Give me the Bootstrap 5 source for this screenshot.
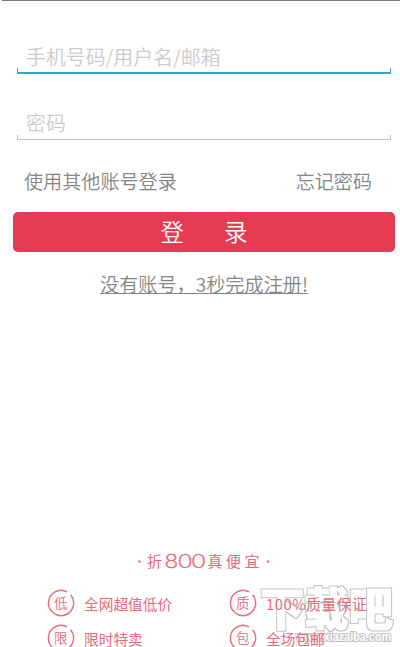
<!DOCTYPE html>
<html lang="zh-CN">
<head>
<meta charset="utf-8">
<meta name="viewport" content="width=device-width, initial-scale=1">
<title>登录</title>
<link href="https://cdn.jsdelivr.net/npm/bootstrap@5.3.0/dist/css/bootstrap.min.css" rel="stylesheet">
<style>
body{font-family:"Noto Sans CJK SC",sans-serif;font-weight:350;color:#858585;background:#fff}
.screen{width:400px;height:647px}
.topline{height:1px;margin-left:2px;background:#777}
.field{margin:0 9px 0 17px;height:34px;background:none}
.field input{height:34px;font-size:19.9px;line-height:34px;font-weight:350;color:#888;padding-left:9px}
.field input:focus{background:none;box-shadow:none}
.field input::placeholder{color:#cbcbcb;opacity:1}
.edge{left:0;right:0;bottom:0;height:5px;border:1px solid #c2c2c2;border-top:0}
.active-field .edge{border:2px solid #3ba3c4;border-left-width:1px;border-right-width:1px;border-top:0;height:6px}
.first{margin-top:39px}
.second{margin-top:32px}
.help{margin:26px 28px 0 24px;height:30px;font-size:19.1px;line-height:30px}
.help a{color:#858585}
.login-btn{margin:16px 5px 0 13px;height:40px;width:382px;border-radius:5px;background:#e53c54;color:#fff;font-size:23.5px;font-weight:350;gap:40px}
.login-btn:hover{background:#e53c54;color:#fff}
.register{margin:17px 0 0 100px;width:208px;height:30px;line-height:30px;font-size:19.15px}
.register a{color:#858585;text-decoration-thickness:1px;text-underline-offset:1px}
.slogan{margin-top:250px;height:24px}
.promises{margin:16px 0 0 47px;width:353px;row-gap:7px;z-index:1}
.promise{width:182px;height:28px;color:#e8697b;font-size:14.7px;line-height:28px;gap:9px}
.promise:nth-child(even){width:171px}
.promise span{font-weight:400;padding-top:1px}
.wide{letter-spacing:.56px}
.watermark{left:256px;top:580px}
</style>
<script src="https://cdn.jsdelivr.net/npm/bootstrap@5.3.0/dist/js/bootstrap.bundle.min.js"></script>
</head>
<body>
<main class="screen position-relative overflow-hidden d-flex flex-column">
  <div class="topline flex-shrink-0"></div>
  <div class="field first active-field position-relative flex-shrink-0">
    <input class="form-control border-0 bg-transparent py-0 pe-0" type="text" placeholder="手机号码/用户名/邮箱" aria-label="手机号码/用户名/邮箱">
    <div class="edge position-absolute"></div>
  </div>
  <div class="field second position-relative flex-shrink-0">
    <input class="form-control border-0 bg-transparent py-0 pe-0" type="password" placeholder="密码" aria-label="密码">
    <div class="edge position-absolute"></div>
  </div>
  <div class="help d-flex justify-content-between flex-shrink-0">
    <a class="text-decoration-none" href="#">使用其他账号登录</a>
    <a class="text-decoration-none" href="#">忘记密码</a>
  </div>
  <button type="button" class="login-btn btn border-0 p-0 d-flex justify-content-center align-items-center flex-shrink-0"><span>登</span><span>录</span></button>
  <div class="register text-nowrap flex-shrink-0"><a href="#">没有账号，3秒完成注册!</a></div>
  <div class="slogan flex-shrink-0">
    <svg class="d-block" width="400" height="24" fill="#e8697b" font-weight="400">
      <circle cx="139.500" cy="12.500" r="1.200"/>
      <text x="147" y="18" font-size="15">折</text>
      <text x="164.500" y="18.500" font-family="Lato" font-weight="300" font-size="19" stroke="#e8697b" stroke-width=".4" textLength="41" lengthAdjust="spacingAndGlyphs">800</text>
      <text x="207.500" y="18" font-size="15">真</text>
      <text x="226" y="18" font-size="15">便</text>
      <text x="244.500" y="18" font-size="15">宜</text>
      <circle cx="268" cy="12.500" r="1.200"/>
    </svg>
  </div>
  <div class="promises position-relative d-flex flex-wrap flex-shrink-0">
    <div class="promise d-flex align-items-center"><svg width="28" height="28" fill="none"><path d="M20 2.900A12.600 12.600 0 1 0 23.600 5.800" stroke="#e8697b" stroke-width="1.400"/><text x="7" y="19" font-size="13.500" fill="#e8697b">低</text></svg><span>全网超值低价</span></div>
    <div class="promise d-flex align-items-center"><svg width="28" height="28" fill="none"><path d="M20 2.900A12.600 12.600 0 1 0 23.600 5.800" stroke="#e8697b" stroke-width="1.400"/><text x="7" y="19" font-size="13.500" fill="#e8697b">质</text></svg><span class="wide">100%质量保证</span></div>
    <div class="promise d-flex align-items-center"><svg width="28" height="28" fill="none"><path d="M20 2.900A12.600 12.600 0 1 0 23.600 5.800" stroke="#e8697b" stroke-width="1.400"/><text x="7" y="19" font-size="13.500" fill="#e8697b">限</text></svg><span>限时特卖</span></div>
    <div class="promise d-flex align-items-center"><svg width="28" height="28" fill="none"><path d="M20 2.900A12.600 12.600 0 1 0 23.600 5.800" stroke="#e8697b" stroke-width="1.400"/><text x="7" y="19" font-size="13.500" fill="#e8697b">包</text></svg><span>全场包邮</span></div>
  </div>
  <svg class="watermark position-absolute" width="144" height="67">
    <defs><filter id="outline" x="-5%" y="-5%" width="110%" height="110%">
      <feMorphology in="SourceAlpha" operator="dilate" radius="1" result="wide"/>
      <feComposite in="wide" in2="SourceAlpha" operator="out" result="rim"/>
      <feFlood flood-color="#c2c2c2"/><feComposite in2="rim" operator="in"/>
    </filter></defs>
    <text x="4" y="46" font-weight="900" font-size="45" stroke="#000" stroke-width="1.200" textLength="133" lengthAdjust="spacingAndGlyphs" filter="url(#outline)">下载吧</text>
    <text x="40" y="61" font-family="Liberation Sans" font-weight="700" font-size="12.500" fill="#fff" stroke="#c0c0c0" stroke-width="2" paint-order="stroke" textLength="95" lengthAdjust="spacingAndGlyphs">www.xiazaiba.com</text>
  </svg>
</main>
</body>
</html>
